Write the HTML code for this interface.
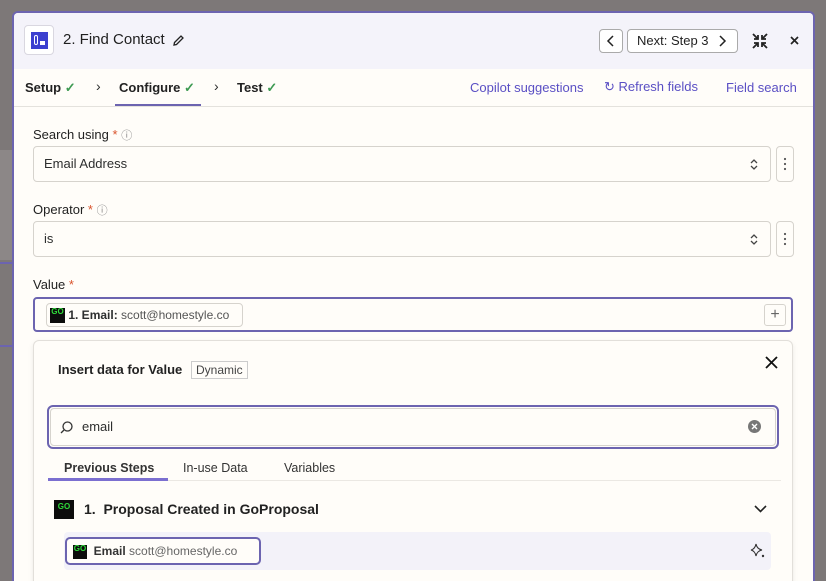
<!DOCTYPE html>
<html><head><meta charset="utf-8"><style>
*{box-sizing:border-box;margin:0;padding:0}
body{width:826px;height:574px;overflow:hidden;background:#7d7878;font-family:"Liberation Sans",sans-serif;color:#2d2e2e;position:relative}
.abs{position:absolute}
.panel{left:12px;top:11px;width:803px;height:570px;background:#fffdf9;border:2px solid #6c64b0;border-bottom:none;border-radius:6px 6px 0 0;overflow:hidden}
.hdr{left:0;top:0;width:100%;height:56px;background:#f4f3fa}
.tabs{left:0;top:56px;width:100%;height:38px;border-bottom:1px solid #e4e2dd}
.lbl{font-size:13px;color:#222}
.req{color:#d9532c}
.field{height:36px;border:1px solid #d6d3cd;border-radius:4px;background:#fffdf9;font-size:13px;padding:0 10px;line-height:34px}
.dots{width:18px;height:36px;border:1px solid #d6d3cd;border-radius:4px}
.purple{color:#5a4fc4}
.go{display:inline-block;background:#0c0c0c;color:#2fdc3a;font-weight:bold;font-size:8px;line-height:8px;text-align:center;vertical-align:middle}
</style></head><body>
<div class="abs" style="left:0;top:150px;width:12px;height:110px;background:#8c8787"></div>
<div class="abs" style="left:0;top:262px;width:12px;height:2px;background:#6c64b0"></div>
<div class="abs" style="left:0;top:345px;width:12px;height:2px;background:#6c64b0"></div>
<div class="abs panel">
 <div class="abs hdr">
  <div class="abs" style="left:10px;top:12px;width:30px;height:30px;border:1px solid #d9d7e0;border-radius:4px;background:#fff"></div>
  <div class="abs" style="left:17px;top:19px;width:17px;height:17px;background:#3b3fcf"></div>
  <div class="abs" style="left:20px;top:22px;width:4px;height:10px;border:1.5px solid #fff;border-radius:2px"></div>
  <div class="abs" style="left:26px;top:28px;width:5px;height:4px;background:#fff"></div>
  <div class="abs" style="left:49px;top:18px;font-size:15px;color:#1f1f1f">2. Find Contact</div>
  <svg class="abs" style="left:158px;top:21px" width="13" height="13" viewBox="0 0 13 13"><path d="M2 11 L2.5 8.5 L9 2 L11 4 L4.5 10.5 Z" fill="none" stroke="#222" stroke-width="1.3"/></svg>
  <div class="abs" style="left:585px;top:16px;width:24px;height:24px;border:1px solid #aaa;border-radius:4px;background:#fff"></div>
  <svg class="abs" style="left:592px;top:22px" width="10" height="12"><path d="M7 1 L2 6 L7 11" fill="none" stroke="#222" stroke-width="1.5"/></svg>
  <div class="abs" style="left:613px;top:16px;width:111px;height:24px;border:1px solid #aaa;border-radius:4px;background:#fff;font-size:13px;line-height:22px;padding-left:9px;color:#222">Next: Step 3</div>
  <svg class="abs" style="left:704px;top:22px" width="10" height="12"><path d="M2 1 L7 6 L2 11" fill="none" stroke="#222" stroke-width="1.5"/></svg>
  <svg class="abs" style="left:737px;top:19px" width="18" height="18" viewBox="0 0 18 18" fill="none" stroke="#222" stroke-width="1.8"><path d="M2 2 L7 7 M3 7 H7 V3"/><path d="M16 2 L11 7 M15 7 H11 V3"/><path d="M2 16 L7 11 M3 11 H7 V15"/><path d="M16 16 L11 11 M15 11 H11 V15"/></svg>
  <svg class="abs" style="left:776px;top:23px" width="9" height="9"><path d="M1 1 L8 8 M8 1 L1 8" stroke="#222" stroke-width="1.7"/></svg>
 </div>
 <div class="abs tabs">
  <div class="abs" style="left:11px;top:11px;font-size:13px;font-weight:bold;color:#222">Setup <span style="color:#3d9a52">✓</span></div>
  <div class="abs" style="left:82px;top:9px;font-size:14px">›</div>
  <div class="abs" style="left:105px;top:11px;font-size:13px;font-weight:bold;color:#222">Configure <span style="color:#3d9a52">✓</span></div>
  <div class="abs" style="left:101px;top:35px;width:86px;height:2px;background:#6c64b0"></div>
  <div class="abs" style="left:200px;top:9px;font-size:14px">›</div>
  <div class="abs" style="left:223px;top:11px;font-size:13px;font-weight:bold;color:#222">Test <span style="color:#3d9a52">✓</span></div>
  <div class="abs purple" style="left:456px;top:11px;font-size:13px">Copilot suggestions</div>
  <div class="abs purple" style="left:590px;top:10px;font-size:13px">↻ Refresh fields</div>
  <div class="abs purple" style="left:712px;top:11px;font-size:13px">Field search</div>
 </div>
 <div class="abs lbl" style="left:19px;top:114px">Search using <span class="req">*</span> <span style="color:#888;font-size:11px">ⓘ</span></div>
 <div class="abs field" style="left:19px;top:133px;width:738px">Email Address</div>
 <svg class="abs" style="left:735px;top:145px" width="10" height="13"><path d="M2 5 L5 2 L8 5 M2 8 L5 11 L8 8" fill="none" stroke="#444" stroke-width="1.3"/></svg>
 <div class="abs dots" style="left:762px;top:133px"></div>
 <svg class="abs" style="left:769px;top:144px" width="4" height="14"><circle cx="2" cy="2" r="1.1" fill="#555"/><circle cx="2" cy="7" r="1.1" fill="#555"/><circle cx="2" cy="12" r="1.1" fill="#555"/></svg>
 <div class="abs lbl" style="left:19px;top:189px">Operator <span class="req">*</span> <span style="color:#888;font-size:11px">ⓘ</span></div>
 <div class="abs field" style="left:19px;top:208px;width:738px">is</div>
 <svg class="abs" style="left:735px;top:220px" width="10" height="13"><path d="M2 5 L5 2 L8 5 M2 8 L5 11 L8 8" fill="none" stroke="#444" stroke-width="1.3"/></svg>
 <div class="abs dots" style="left:762px;top:208px"></div>
 <svg class="abs" style="left:769px;top:219px" width="4" height="14"><circle cx="2" cy="2" r="1.1" fill="#555"/><circle cx="2" cy="7" r="1.1" fill="#555"/><circle cx="2" cy="12" r="1.1" fill="#555"/></svg>
 <div class="abs lbl" style="left:19px;top:264px">Value <span class="req">*</span></div>
 <div class="abs" style="left:19px;top:284px;width:760px;height:35px;border:2px solid #6c64b0;border-radius:4px"></div>
 <div class="abs" style="left:32px;top:290px;width:197px;height:24px;border:1px solid #d6d3cd;border-radius:4px;font-size:12px;line-height:22px;padding-left:3px"><span class="go" style="width:15px;height:15px">GO</span> <b>1. Email:</b> <span style="color:#555">scott@homestyle.co</span></div>
 <div class="abs" style="left:750px;top:291px;width:22px;height:22px;border:1px solid #d6d3cd;border-radius:3px;text-align:center;line-height:20px;color:#666">+</div>
 <div class="abs" style="left:19px;top:327px;width:760px;height:250px;border:1px solid #e2dfda;border-radius:6px;background:#fffdf9;box-shadow:0 2px 6px rgba(0,0,0,.08)">
  <div class="abs" style="left:24px;top:21px;font-size:13px;font-weight:bold;color:#222">Insert data for Value</div>
  <div class="abs" style="left:157px;top:20px;border:1px solid #ccc;font-size:12px;padding:1px 4px;color:#444">Dynamic</div>
  <svg class="abs" style="left:731px;top:15px" width="13" height="13"><path d="M1 1 L12 12 M12 1 L1 12" stroke="#111" stroke-width="1.8"/></svg>
  <div class="abs" style="left:13px;top:64px;width:732px;height:44px;border:2px solid #6c64b0;border-radius:6px"></div>
  <div class="abs" style="left:16px;top:67px;width:726px;height:38px;border:1px solid #d6d3cd;border-radius:4px"></div>
  <svg class="abs" style="left:25px;top:79px" width="15" height="15"><circle cx="8.5" cy="6.5" r="4.5" fill="none" stroke="#333" stroke-width="1.3"/><path d="M5 10 L2 13" stroke="#333" stroke-width="1.3"/></svg>
  <div class="abs" style="left:48px;top:78px;font-size:13px">email</div>
  <div class="abs" style="left:714px;top:79px;width:13px;height:13px;border-radius:50%;background:#777"></div>
  <svg class="abs" style="left:717px;top:82px" width="7" height="7"><path d="M1 1 L6 6 M6 1 L1 6" stroke="#fff" stroke-width="1.4"/></svg>
  <div class="abs" style="left:30px;top:120px;font-size:12.5px;font-weight:bold;color:#333">Previous Steps</div>
  <div class="abs" style="left:149px;top:120px;font-size:12.5px;color:#333">In-use Data</div>
  <div class="abs" style="left:250px;top:120px;font-size:12.5px;color:#333">Variables</div>
  <div class="abs" style="left:14px;top:139px;width:733px;height:1px;background:#ebe8e3"></div>
  <div class="abs" style="left:14px;top:137px;width:120px;height:3px;background:#7b6fd0"></div>
  <div class="abs go" style="left:20px;top:159px;width:20px;height:19px;padding-top:3px">GO</div>
  <div class="abs" style="left:50px;top:160px;font-size:14px;font-weight:bold;color:#222">1.&nbsp;&nbsp;Proposal Created in GoProposal</div>
  <svg class="abs" style="left:720px;top:164px" width="13" height="8"><path d="M1 1 L6.5 6.5 L12 1" fill="none" stroke="#222" stroke-width="1.6"/></svg>
  <div class="abs" style="left:30px;top:191px;width:707px;height:38px;background:#f3f2f9;border-radius:4px"></div>
  <div class="abs" style="left:31px;top:196px;width:196px;height:28px;border:2px solid #6c64b0;border-radius:5px;background:#fffdf9;font-size:12px;line-height:24px;padding-left:6px"><span class="go" style="width:14px;height:14px">GO</span>&nbsp; <b style="color:#333">Email</b> <span style="color:#666">scott@homestyle.co</span></div>
  <svg class="abs" style="left:716px;top:202px" width="15" height="15"><path d="M6 1 Q7 6 12 7 Q7 8 6 13 Q5 8 1 7 Q5 6 6 1 Z" fill="none" stroke="#333" stroke-width="1.1"/><circle cx="13" cy="13" r="1.2" fill="#333"/></svg>
 </div>
</div>
</body></html>
